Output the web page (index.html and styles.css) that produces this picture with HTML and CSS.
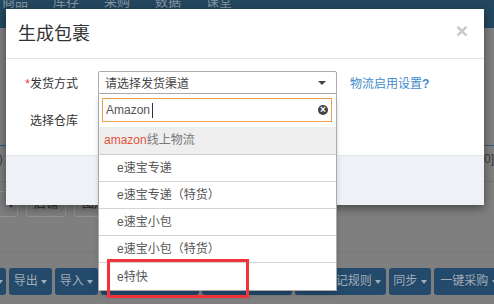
FILE: index.html
```html
<!DOCTYPE html>
<html lang="zh-CN">
<head>
  <meta charset="UTF-8">
  <title>生成包裹</title>
  <link rel="stylesheet" href="styles.css">
</head>
<body>
  <div class="page">
    <div class="topnav">
      <span class="nav-item">商品</span>
      <span class="nav-item">库存</span>
      <span class="nav-item">采购</span>
      <span class="nav-item">数据</span>
      <span class="nav-item">课堂</span>
    </div>
    <div class="tabs">
      <span class="tab">(0)</span>
      <span class="tab">[0]</span>
    </div>
    <div class="toolbar">
      <span class="tool-btn tool-first">▾</span>
      <span class="tool-btn">店铺</span>
      <span class="tool-btn">图片</span>
    </div>
    <div class="band"></div>
    <div class="actions">
      <span class="act-btn w40">更多 <i class="caret"></i></span>
      <span class="act-btn w43">导出 <i class="caret"></i></span>
      <span class="act-btn w43">导入 <i class="caret"></i></span>
      <span class="act-btn w98"></span>
      <span class="act-btn w90"></span>
      <span class="act-btn w91">设置标记规则 <i class="caret"></i></span>
      <span class="act-btn w42">同步 <i class="caret"></i></span>
      <span class="act-btn w70">一键采购 <i class="caret"></i></span>
    </div>
  </div>

  <div class="modal">
    <div class="modal-header">
      <h4 class="modal-title">生成包裹</h4>
      <span class="close">×</span>
    </div>
    <div class="modal-body">
      <div class="form-row">
        <label class="form-label"><span class="req">*</span>发货方式</label>
        <div class="select-wrap">
          <div class="select">
            <span>请选择发货渠道</span>
            <i class="select-arrow"></i>
          </div>
          <div class="dropdown">
            <div class="search">
              <span class="search-text">Amazon</span><span class="cursor"></span>
              <span class="clear">×</span>
            </div>
            <div class="group-label"><span class="brand">amazon</span>线上物流</div>
            <div class="option">e速宝专递</div>
            <div class="option">e速宝专递（特货）</div>
            <div class="option">e速宝小包</div>
            <div class="option">e速宝小包（特货）</div>
            <div class="option option-last">e特快</div>
          </div>
        </div>
        <a class="help-link" href="#">物流启用设置<b>?</b></a>
      </div>
      <div class="form-row row-second">
        <label class="form-label">选择仓库</label>
      </div>
    </div>
    <div class="modal-footer"></div>
  </div>

  <div class="mark"></div>
</body>
</html>
```

FILE: styles.css
```css
body {
  margin: 0;
  background: #7f7f7f;
  font: 12px "Liberation Sans", "Noto Sans CJK SC", sans-serif;
  color: #333;
  position: relative;
  height: 304px;
  overflow: hidden;
}

/* page behind the backdrop */
.topnav {
  height: 28px;
  background: #23475f;
  display: flex;
  align-items: flex-start;
  gap: 25px;
  padding-left: 2px;
}
.nav-item {
  font-size: 13px;
  line-height: 20px;
  margin-top: -8px;
  color: #8796a3;
}
.tabs {
  margin-top: 117px;
  height: 37px;
  border-top: 1px solid #2f5b7c;
  border-bottom: 1px solid #737373;
  display: flex;
  justify-content: space-between;
  padding-top: 6px;
  box-sizing: border-box;
  color: #3a3a3a;
}
.tab:first-child { margin-left: -12px; }
.toolbar {
  margin-top: 9px;
  display: flex;
  gap: 8px;
  margin-left: -6px;
}
.tool-btn {
  height: 26px;
  line-height: 24px;
  box-sizing: border-box;
  border: 1px solid #939393;
  border-radius: 3px;
  padding: 0 7px;
  color: #2a2a2a;
  font-size: 12px;
}
.tool-first { width: 24px; text-align: right; padding: 0 3px; }
.band {
  margin-top: 35px;
  border-top: 1px solid #787878;
}
.actions {
  margin-top: 15px;
  display: flex;
  gap: 3px;
  margin-left: -34px;
}
.act-btn {
  flex: none;
  height: 27px;
  line-height: 27px;
  background: #23496b;
  border-radius: 3px;
  color: #a3adb8;
  text-align: center;
  font-size: 12px;
  white-space: nowrap;
}
.caret {
  display: inline-block;
  border-top: 4px solid #a3adb8;
  border-left: 3px solid transparent;
  border-right: 3px solid transparent;
  vertical-align: middle;
}
.w40 { width: 40px; }
.w42 { width: 42px; }
.w43 { width: 43px; }
.w70 { width: 70px; }
.w90 { width: 90px; }
.w91 { width: 91px; }
.w98 { width: 98px; }

/* modal */
.modal {
  position: absolute;
  left: 6px;
  top: 9px;
  width: 478px;
  background: #fff;
  box-shadow: 0 3px 9px rgba(0, 0, 0, 0.45);
}
.modal-header {
  height: 50px;
  box-sizing: border-box;
  border-bottom: 1px solid #e5e5e5;
  display: flex;
  align-items: center;
  justify-content: space-between;
  padding: 0 16px 0 12px;
}
.modal-title {
  margin: 0;
  font-size: 18px;
  font-weight: normal;
  color: #333;
  line-height: 20px;
}
.close {
  font-size: 21px;
  font-weight: bold;
  color: #c8c8c8;
  margin-top: -6px;
}
.modal-body {
  height: 96px;
  box-sizing: border-box;
  padding-top: 12px;
}
.form-row {
  display: flex;
  align-items: center;
  height: 23px;
  padding-left: 12px;
}
.row-second { margin-top: 14px; }
.form-label {
  width: 60px;
  margin-right: 20px;
  text-align: right;
  color: #333;
}
.req { color: #e33; }
.select-wrap {
  position: relative;
  width: 239px;
}
.select {
  height: 23px;
  box-sizing: border-box;
  border: 1px solid #aaa;
  border-radius: 2px 2px 0 0;
  padding-left: 6px;
  display: flex;
  align-items: center;
  justify-content: space-between;
  color: #444;
}
.select-arrow {
  border-top: 4px solid #444;
  border-left: 4px solid transparent;
  border-right: 4px solid transparent;
  margin-right: 10px;
}
.help-link {
  margin-left: 13px;
  color: #428bca;
  text-decoration: none;
}
.dropdown {
  position: absolute;
  top: 23px;
  left: 0;
  width: 239px;
  box-sizing: border-box;
  background: #fff;
  border: 1px solid #aaa;
  border-top: none;
  padding-top: 4px;
  box-shadow: 0 4px 5px rgba(0, 0, 0, 0.15);
  z-index: 2;
}
.search {
  margin: 0 4px 5px 3px;
  height: 24px;
  box-sizing: border-box;
  border: 1px solid #f0a04b;
  display: flex;
  align-items: center;
  padding: 0 3px;
  color: #555;
}
.cursor {
  width: 1px;
  height: 15px;
  background: #333;
  margin-left: 2px;
}
.clear {
  margin-left: auto;
  width: 10px;
  height: 10px;
  border-radius: 50%;
  background: #444;
  color: #fff;
  font-size: 10px;
  font-weight: bold;
  line-height: 10px;
  text-align: center;
}
.group-label {
  height: 27px;
  line-height: 27px;
  background: #eee;
  border-bottom: 1px solid #ccc;
  padding-left: 5px;
  color: #777;
}
.brand { color: #e5533d; }
.option {
  height: 26px;
  line-height: 26px;
  border-bottom: 1px solid #d4d4d4;
  padding-left: 18px;
  color: #555;
}
.option-last {
  height: 27px;
  line-height: 28px;
  border-bottom: none;
}
.modal-footer {
  height: 50px;
  box-sizing: border-box;
  border-top: 1px solid #e5e5e5;
  background: #eef1f5;
}

/* annotation */
.mark {
  position: absolute;
  left: 107px;
  top: 259px;
  width: 142px;
  height: 39px;
  box-sizing: border-box;
  border: 3px solid #f2333b;
  z-index: 3;
}
```
